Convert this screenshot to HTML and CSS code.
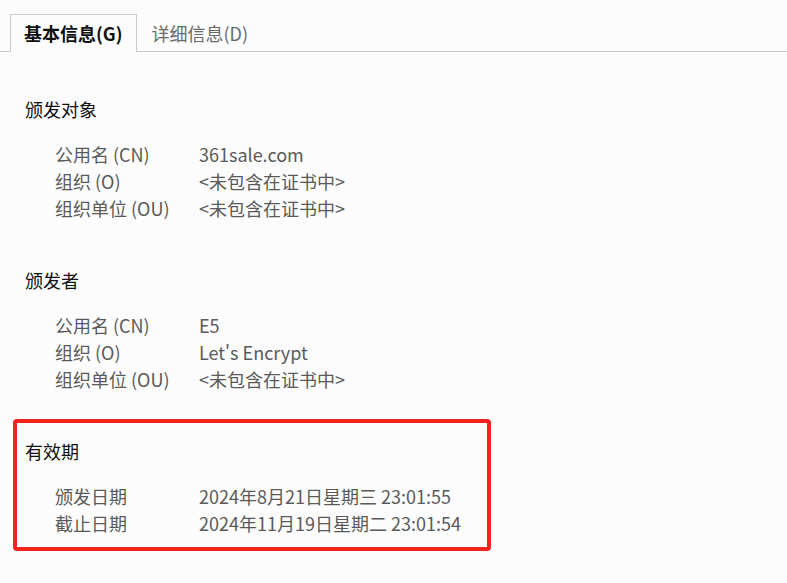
FILE: index.html
```html
<!DOCTYPE html>
<html lang="zh-CN">
<head>
<meta charset="utf-8">
<title>证书查看器</title>
<link rel="stylesheet" href="styles.css">
</head>
<body>
<div class="tabs">
  <div class="tab active">基本信息(G)</div>
  <div class="tab">详细信息(D)</div>
</div>
<div class="content">
  <section class="section">
    <h2 class="heading">颁发对象</h2>
    <div class="rows">
      <div class="label">公用名 (CN)</div><div class="value">361sale.com</div>
      <div class="label">组织 (O)</div><div class="value">&lt;未包含在证书中&gt;</div>
      <div class="label">组织单位 (OU)</div><div class="value">&lt;未包含在证书中&gt;</div>
    </div>
  </section>
  <section class="section">
    <h2 class="heading">颁发者</h2>
    <div class="rows">
      <div class="label">公用名 (CN)</div><div class="value">E5</div>
      <div class="label">组织 (O)</div><div class="value">Let's Encrypt</div>
      <div class="label">组织单位 (OU)</div><div class="value">&lt;未包含在证书中&gt;</div>
    </div>
  </section>
  <section class="section highlight">
    <h2 class="heading">有效期</h2>
    <div class="rows">
      <div class="label">颁发日期</div><div class="value">2024年8月21日星期三 23:01:55</div>
      <div class="label">截止日期</div><div class="value">2024年11月19日星期二 23:01:54</div>
    </div>
  </section>
</div>
</body>
</html>
```
FILE: styles.css
```css
html, body {
  margin: 0;
  padding: 0;
  background: #fcfcfc;
}
body {
  font-family: "Noto Sans CJK SC", "Noto Sans", sans-serif;
  font-size: 18px;
  color: #5a5a5a;
  width: 787px;
  height: 583px;
  overflow: hidden;
}
.tabs {
  display: flex;
  padding: 14px 0 0 10px;
  border-bottom: 1px solid #c9c9c9;
  height: 37px;
}
.tab {
  height: 37px;
  line-height: 37px;
  padding: 0 14px;
  white-space: nowrap;
  color: #6a6a6a;
  box-sizing: border-box;
  border: 1px solid transparent;
  border-bottom: none;
}
.tab.active {
  font-weight: bold;
  color: #111;
  border-color: #cbcbcb;
  background: #fcfcfc;
  height: 38px;
  margin-bottom: -1px;
  padding: 0 13px;
}
.content {
  padding: 44px 0 0 25px;
}
.section {
  margin-bottom: 45px;
}
.section:nth-child(2) {
  margin-bottom: 26px;
}
.heading {
  margin: 0 0 18px 0;
  font-size: 18px;
  font-weight: normal;
  line-height: 27px;
  color: #111;
}
.rows {
  display: grid;
  grid-template-columns: 144px auto;
  padding-left: 30px;
  line-height: 27px;
}
.highlight {
  margin: 0 0 0 -12px;
  width: 462px;
  border: 4px solid #f5231e;
  border-radius: 4px;
  padding: 15px 0 10px 8px;
}
```
